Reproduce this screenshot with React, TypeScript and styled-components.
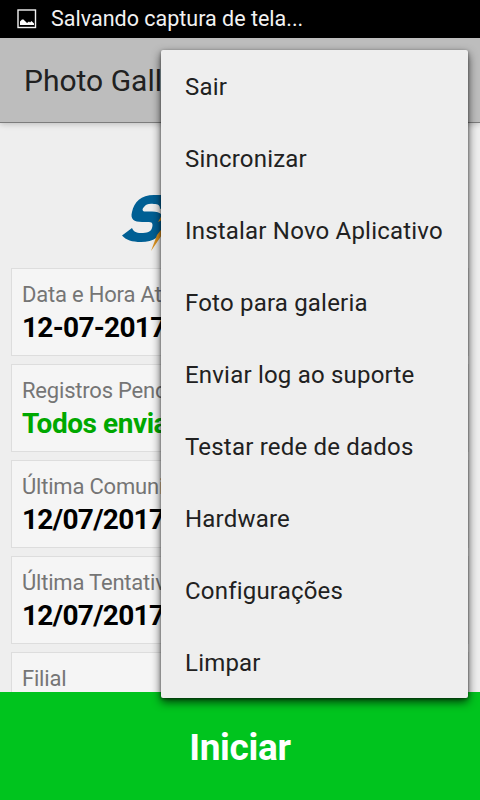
import React from 'react';
import styled, { createGlobalStyle } from 'styled-components';

const GlobalStyle = createGlobalStyle`
  * { box-sizing: border-box; }
  body { margin: 0; background: #eeeeee; font-family: Roboto, 'Liberation Sans', sans-serif; }
`;

const Screen = styled.div`
  position: relative;
  display: flex;
  flex-direction: column;
  width: 480px;
  height: 800px;
  overflow: hidden;
  background: #eeeeee;
  white-space: nowrap;
`;

const StatusBar = styled.div`
  display: flex;
  align-items: center;
  flex: none;
  gap: 14px;
  height: 38px;
  padding: 0 0 1px 17px;
  background: #000;
  color: #f2f2f2;
  font-size: 21.5px;
  line-height: 25px;
`;

const Toolbar = styled.header`
  z-index: 1;
  display: flex;
  align-items: center;
  flex: none;
  height: 85px;
  padding-left: 24px;
  background: #bdbdbd;
  border-bottom: 1px solid #7c7c7c;
  box-shadow: 0 1px 6px rgba(0, 0, 0, 0.22);
`;

const Title = styled.h1`
  margin: 0;
  color: #212121;
  font-size: 30px;
  font-weight: 400;
`;

const Content = styled.main`
  flex: 1;
  min-height: 0;
  overflow: hidden;
  padding: 0 11px;
`;

const LogoArea = styled.div`
  height: 145px;
  padding: 70px 0 0 109px;
`;

const CardList = styled.div`
  display: flex;
  flex-direction: column;
  gap: 8px;
`;

const Card = styled.section`
  flex: none;
  height: 88px;
  padding: 12px 10px 0;
  border: 1px solid #dddddd;
  background: #f5f5f5;
`;

const Label = styled.div`
  color: #757575;
  font-size: 22px;
  line-height: 28px;
  letter-spacing: -0.2px;
`;

const Value = styled.div<{ $status?: boolean }>`
  margin-top: 2px;
  color: ${({ $status }) => ($status ? '#00a800' : '#000')};
  font-size: 28px;
  font-weight: 700;
  line-height: 34px;
  letter-spacing: ${({ $status }) => ($status ? '-0.45px' : '-0.7px')};
`;

const StartButton = styled.button`
  flex: none;
  height: 108px;
  padding: 3px 0 0;
  border: 0;
  background: #00c41e;
  color: #fff;
  font: 700 37px/44px Roboto, 'Liberation Sans', sans-serif;
  letter-spacing: -0.3px;
`;

const Menu = styled.ul`
  position: absolute;
  z-index: 2;
  top: 50px;
  right: 12px;
  width: 307px;
  margin: 0;
  padding: 0;
  list-style: none;
  border-radius: 2px;
  background: #eeeeee;
  box-shadow: 0 4px 10px rgba(0, 0, 0, 0.7), 0 1px 3px rgba(0, 0, 0, 0.4);
`;

const MenuItem = styled.li`
  display: flex;
  align-items: center;
  height: 72px;
  padding: 2px 0 0 24px;
  color: #212121;
  font-size: 24px;
  letter-spacing: 0.2px;
`;

const PictureIcon = () => (
  <svg width="20" height="20" viewBox="0 0 20 20">
    <rect x="1" y="1" width="17.5" height="17.5" fill="none" stroke="#f2f2f2" strokeWidth="1.4" />
    <path d="M3 16V12.500L5 10.500H6.500L8 12L10 14L12 12.500L13 13.500L14.500 12L17 14.500V16Z" fill="#fff" />
  </svg>
);

const Logo = () => (
  <svg width="60" height="64" viewBox="120 193 60 64">
    <path
      d="M172 195H154C141 195 134 202 132 212C130 219 134 222 142 222H149C153 222 153 225 152 228C151 232 147 233 141 233C136 233 133 231 132 228L122 235.500C126 240 132 242 141 242C154 242 161 237 163 225C165 215 161 211.500 152 211.500H145C142 211.500 142 209 144 207C146 204 149 203.500 154 204C158 204 160 205 160 209L172 204Z"
      fill="#005f94"
    />
    <path d="M168 204L158 222L162 220L164 226L157 235L151 251L168 226L162 224L168 212Z" fill="#dc921f" />
  </svg>
);

const cards = [
  { label: 'Data e Hora Atual', value: '12-07-2017' },
  { label: 'Registros Pendentes', value: 'Todos enviados', status: true },
  { label: 'Última Comunicação', value: '12/07/2017' },
  { label: 'Última Tentativa', value: '12/07/2017' },
  { label: 'Filial', value: '' },
];

const menuItems = [
  'Sair',
  'Sincronizar',
  'Instalar Novo Aplicativo',
  'Foto para galeria',
  'Enviar log ao suporte',
  'Testar rede de dados',
  'Hardware',
  'Configurações',
  'Limpar',
];

export default function App() {
  return (
    <>
      <GlobalStyle />
      <Screen>
        <StatusBar>
          <PictureIcon />
          <span>Salvando captura de tela...</span>
        </StatusBar>
        <Toolbar>
          <Title>Photo Gallery</Title>
        </Toolbar>
        <Content>
          <LogoArea>
            <Logo />
          </LogoArea>
          <CardList>
            {cards.map(({ label, value, status }) => (
              <Card key={label}>
                <Label>{label}</Label>
                <Value $status={status}>{value}</Value>
              </Card>
            ))}
          </CardList>
        </Content>
        <StartButton>Iniciar</StartButton>
        <Menu>
          {menuItems.map((item) => (
            <MenuItem key={item}>{item}</MenuItem>
          ))}
        </Menu>
      </Screen>
    </>
  );
}
